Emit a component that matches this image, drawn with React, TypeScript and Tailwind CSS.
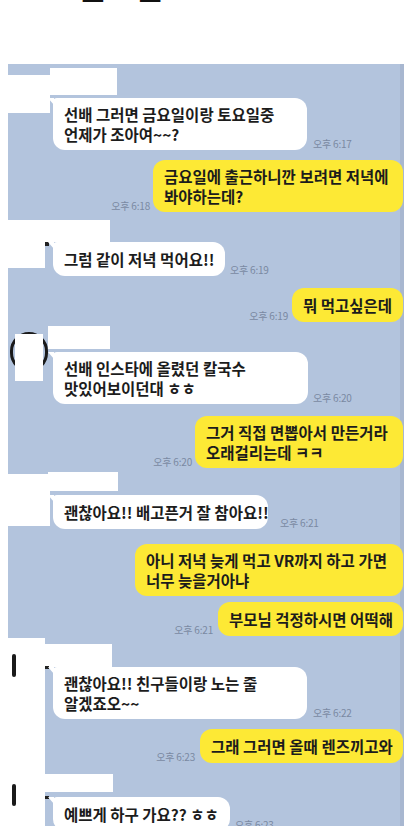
import React from "react";

const Time = ({ t }: { t: string }) => (
  <span className="text-[10px] leading-[12px] font-normal text-[#7a89a2] whitespace-nowrap tracking-[-0.2px]">
    {t}
  </span>
);

const InBubble = ({ w, lines }: { w: string; lines: string[] }) => (
  <div className={`relative bg-white rounded-[12px] rounded-tl-[4px] px-[11px] leading-[20px] text-[15.5px] text-[#1c1c1c] whitespace-nowrap ${lines.length > 1 ? "py-[6px]" : "py-[7px]"} ${w}`}>
    <div className="absolute -left-[5px] top-0 w-0 h-0 border-t-[7px] border-t-white border-l-[6px] border-l-transparent" />
    {lines.map((l, i) => (
      <div key={i}>{l}</div>
    ))}
  </div>
);

const OutBubble = ({ w, lines }: { w: string; lines: string[] }) => (
  <div className={`bg-[#fde935] rounded-[12px] px-[11px] leading-[20px] text-[15.5px] text-[#1c1c1c] whitespace-nowrap ${lines.length > 1 ? "py-[6px]" : "py-[7px]"} ${w}`}>
    {lines.map((l, i) => (
      <div key={i}>{l}</div>
    ))}
  </div>
);

export default function App() {
  return (
    <div className="w-[413px] h-[826px] overflow-hidden bg-white font-['Noto_Sans_CJK_KR','Noto_Sans',sans-serif] font-semibold">
      {/* top white area with cut-off heading */}
      <div className="h-[64px] overflow-hidden">
        <div className="flex pl-[77px] gap-[26px] -mt-[32px] text-[34px] leading-[34px] font-bold text-[#111]">
          <span>함</span>
          <span>함</span>
        </div>
      </div>

      {/* chat panel */}
      <div className="relative ml-[8px] w-[396px] h-[762px] overflow-hidden bg-[linear-gradient(to_left,#a8b7d0_4px,#b3c4dd_4px)] flex flex-col">
        {/* G1 */}
        <div className="relative mt-[4px] pt-[30px] pl-[45px]">
          <div className="absolute left-0 top-[7px] w-[42px] h-[38px] bg-white" />
          <div className="absolute left-[42px] top-0 w-[67px] h-[27px] bg-white" />
          <div className="flex items-end gap-[6px]">
            <InBubble w="w-[254px]" lines={["선배 그러면 금요일이랑 토요일중", "언제가 조아여~~?"]} />
            <Time t="오후 6:17" />
          </div>
        </div>

        {/* G2 */}
        <div className="mt-[10px] mr-[1px] flex justify-end items-end gap-[3px]">
          <Time t="오후 6:18" />
          <OutBubble w="w-[250px]" lines={["금요일에 출근하니깐 보려면 저녁에", "봐야하는데?"]} />
        </div>

        {/* G3 */}
        <div className="relative mt-[8px] pt-[22px] pl-[45px]">
          <div className="absolute left-0 top-0 w-[37px] h-[48px] bg-white" />
          <div className="absolute left-[37px] top-0 w-[65px] h-[22px] bg-white" />
          <div className="absolute left-[37px] top-[22px] w-[4px] h-[4px] bg-[#222]" />
          <div className="flex items-end gap-[5px]">
            <InBubble w="w-[172px]" lines={["그럼 같이 저녁 먹어요!!"]} />
            <Time t="오후 6:19" />
          </div>
        </div>

        {/* G4 */}
        <div className="mt-[12px] mr-[1px] flex justify-end items-end gap-[4px]">
          <Time t="오후 6:19" />
          <OutBubble w="w-[111px]" lines={["뭐 먹고싶은데"]} />
        </div>

        {/* G5 */}
        <div className="relative mt-[4px] pt-[26px] pl-[45px]">
          <div className="absolute left-[2px] top-[6px] w-[38px] h-[40px] rounded-full border-[3px] border-[#1a1a1a]" />
          <div className="absolute left-[7px] top-[8px] w-[28px] h-[47px] bg-white" />
          <div className="absolute left-[40px] top-0 w-[62px] h-[23px] bg-white" />
          <div className="flex items-end gap-[5px]">
            <InBubble w="w-[255px]" lines={["선배 인스타에 올렸던 칼국수", "맛있어보이던대 ㅎㅎ"]} />
            <Time t="오후 6:20" />
          </div>
        </div>

        {/* G6 */}
        <div className="mt-[12px] mr-[1px] flex justify-end items-end gap-[3px]">
          <Time t="오후 6:20" />
          <OutBubble w="w-[208px]" lines={["그거 직접 면뽑아서 만든거라", "오래걸리는데 ㅋㅋ"]} />
        </div>

        {/* G7 */}
        <div className="relative mt-[4px] pt-[23px] pl-[45px]">
          <div className="absolute left-0 top-[2px] w-[42px] h-[52px] bg-white" />
          <div className="absolute left-[40px] top-0 w-[70px] h-[19px] bg-white" />
          <div className="flex items-end gap-[12px]">
            <InBubble w="w-[215px]" lines={["괜찮아요!! 배고픈거 잘 참아요!!"]} />
            <Time t="오후 6:21" />
          </div>
        </div>

        {/* G8 */}
        <div className="mt-[15px] mr-[1px] flex justify-end">
          <OutBubble w="w-[268px]" lines={["아니 저녁 늦게 먹고 VR까지 하고 가면", "너무 늦을거아냐"]} />
        </div>

        {/* G9 */}
        <div className="mt-[6px] mr-[1px] flex justify-end items-end gap-[5px]">
          <Time t="오후 6:21" />
          <OutBubble w="w-[185px]" lines={["부모님 걱정하시면 어떡해"]} />
        </div>

        {/* left censor column */}
        <div className="absolute left-0 top-[574px] bottom-0 w-[37px] bg-white" />

        {/* G10 */}
        <div className="relative mt-[8px] pt-[23px] pl-[45px]">
          <div className="absolute left-[4px] top-[10px] w-[4px] h-[23px] rounded-full bg-[#1a1a1a]" />
          <div className="absolute left-[37px] top-0 w-[67px] h-[23px] bg-white" />
          <div className="absolute left-[37px] top-[22px] w-[4px] h-[3px] bg-[#222]" />
          <div className="flex items-end gap-[6px]">
            <InBubble w="w-[254px]" lines={["괜찮아요!! 친구들이랑 노는 줄", "알겠죠오~~"]} />
            <Time t="오후 6:22" />
          </div>
        </div>

        {/* G11 */}
        <div className="mt-[10px] mr-[1px] flex justify-end items-end gap-[5px]">
          <Time t="오후 6:23" />
          <OutBubble w="w-[203px]" lines={["그래 그러면 올때 렌즈끼고와"]} />
        </div>

        {/* G12 */}
        <div className="relative mt-[11px] pt-[23px] pl-[45px]">
          <div className="absolute left-[4px] top-[10px] w-[4px] h-[22px] rounded-full bg-[#1a1a1a]" />
          <div className="absolute left-[37px] top-0 w-[68px] h-[18px] bg-white" />
          <div className="absolute left-[37px] top-[22px] w-[4px] h-[3px] bg-[#222]" />
          <div className="flex items-end gap-[5px]">
            <InBubble w="w-[177px]" lines={["예쁘게 하구 가요?? ㅎㅎ"]} />
            <Time t="오후 6:23" />
          </div>
        </div>
      </div>
    </div>
  );
}
